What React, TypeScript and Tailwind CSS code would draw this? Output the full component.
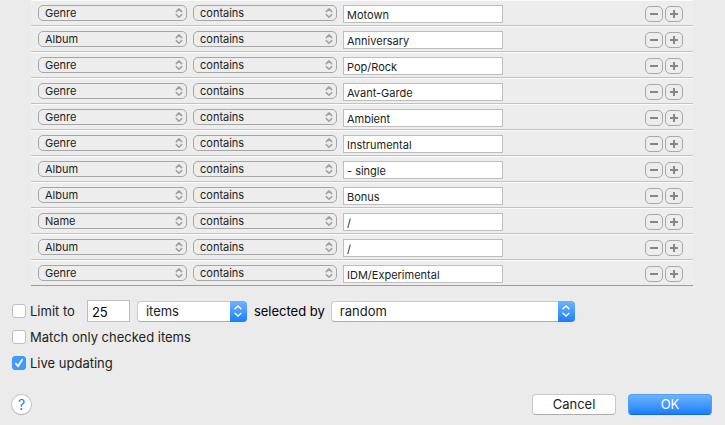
import { useState } from "react";
import clsx from "clsx";

type Rule = {
  field: string;
  value: string;
};

const RULES: Rule[] = [
  { field: "Genre", value: "Motown" },
  { field: "Album", value: "Anniversary" },
  { field: "Genre", value: "Pop/Rock" },
  { field: "Genre", value: "Avant-Garde" },
  { field: "Genre", value: "Ambient" },
  { field: "Genre", value: "Instrumental" },
  { field: "Album", value: "- single" },
  { field: "Album", value: "Bonus" },
  { field: "Name", value: "/" },
  { field: "Album", value: "/" },
  { field: "Genre", value: "IDM/Experimental" },
];

function Chevrons({ path, className }: { path: string; className?: string }) {
  return (
    <svg
      viewBox="0 0 8 12"
      fill="none"
      stroke="currentColor"
      strokeWidth="1.5"
      strokeLinecap="round"
      strokeLinejoin="round"
      aria-hidden="true"
      className={className}
    >
      <path d={path} />
    </svg>
  );
}

function SmallSelect({
  label,
  initial,
  options,
  className,
}: {
  label: string;
  initial: string;
  options: string[];
  className?: string;
}) {
  return (
    <div className={clsx("relative h-4", className)}>
      <select
        aria-label={label}
        defaultValue={initial}
        className="block h-4 w-full appearance-none rounded-[5px] border border-[#a6a6a6] bg-[#ededed] pr-4 pl-1.5 text-[11px] leading-[14px] text-[#222]"
      >
        {options.map((option) => (
          <option key={option}>{option}</option>
        ))}
      </select>
      <Chevrons
        path="M1.3 4.6 4 1.9l2.7 2.7M1.3 7.6 4 10.3l2.7-2.7"
        className="pointer-events-none absolute top-0.5 right-1 h-3 w-2 text-[#a0a0a0]"
      />
    </div>
  );
}

function BlueSelect({
  label,
  options,
  className,
}: {
  label: string;
  options: string[];
  className?: string;
}) {
  return (
    <div className={clsx("relative h-[21px]", className)}>
      <select
        aria-label={label}
        className="block h-[21px] w-full appearance-none rounded-[4px] border border-[#c8c8c8] border-b-[#acacac] bg-white pr-5 pl-2 text-[13px] leading-[18px] text-[#222]"
      >
        {options.map((option) => (
          <option key={option}>{option}</option>
        ))}
      </select>
      <span className="pointer-events-none absolute inset-y-0 right-0 flex w-[17px] items-center justify-center rounded-r-[4px] bg-linear-to-b from-[#6cb3fa] to-[#157efb] text-white">
        <Chevrons
          path="M1 3.7 4 1l3 2.7M1 8.3 4 11l3-2.7"
          className="h-3 w-2"
        />
      </span>
    </div>
  );
}

function RoundButton({ label, plus }: { label: string; plus?: boolean }) {
  return (
    <button
      type="button"
      aria-label={label}
      className="flex h-4 w-[18px] items-center justify-center rounded-[5px] border border-[#a8a8a8] text-[#868686]"
    >
      <svg viewBox="0 0 8 8" fill="currentColor" className="size-2">
        <path d={plus ? "M0 3h3V0h2v3h3v2H5v3H3V5H0z" : "M0 3h8v2H0z"} />
      </svg>
    </button>
  );
}

function RuleRow({ rule }: { rule: Rule }) {
  return (
    <li className="flex h-[26px] items-start border-t border-b border-t-[#fbfbfb] border-b-[#c2c2c2] bg-[#ededed] pt-1 pr-[10px] pl-[7px] last:border-b-[#9c9c9c]">
      <SmallSelect
        label="Field"
        initial={rule.field}
        options={["Genre", "Album", "Name"]}
        className="mr-1.5 w-[149px]"
      />
      <SmallSelect
        label="Condition"
        initial="contains"
        options={["contains", "does not contain", "is", "is not"]}
        className="mr-1.5 w-36"
      />
      <input
        type="text"
        aria-label="Value"
        defaultValue={rule.value}
        className="h-[18px] w-40 border border-[#bdbdbd] bg-white pt-0.5 pl-[3px] text-[11px] leading-[14px] text-[#222] outline-none"
      />
      <div className="ml-auto flex gap-0.5 pt-px">
        <RoundButton label="Remove rule" />
        <RoundButton label="Add rule" plus />
      </div>
    </li>
  );
}

function Checkbox({
  label,
  initial = false,
}: {
  label: string;
  initial?: boolean;
}) {
  const [checked, setChecked] = useState(initial);

  return (
    <label className="flex items-center gap-1">
      <span className="relative size-3.5">
        <input
          type="checkbox"
          checked={checked}
          onChange={(e) => setChecked(e.target.checked)}
          className="block size-3.5 appearance-none rounded-[3px] border border-[#bdbdbd] bg-white checked:border-[#3b96f8] checked:bg-[#429bfa]"
        />
        {checked && (
          <svg
            viewBox="0 0 14 14"
            fill="none"
            stroke="white"
            strokeWidth="1.7"
            strokeLinecap="round"
            strokeLinejoin="round"
            className="pointer-events-none absolute inset-0 size-3.5"
          >
            <path d="M3.8 7.6 6 10.3l4.2-6.6" />
          </svg>
        )}
      </span>
      {label}
    </label>
  );
}

export default function App() {
  return (
    <form
      onSubmit={(e) => e.preventDefault()}
      className="min-h-screen bg-[#ebebeb] font-['Inter',sans-serif] text-[13px] leading-4 text-[#222]"
    >
      <ul className="mr-8 ml-[31px]">
        {RULES.map((rule, i) => (
          <RuleRow key={i} rule={rule} />
        ))}
      </ul>

      <div className="px-3 pt-3">
        <div className="flex h-[26px] items-center">
          <Checkbox label="Limit to" />
          <input
            type="text"
            aria-label="Limit"
            defaultValue="25"
            className="ml-3 h-[22px] w-[43px] border border-[#bdbdbd] bg-white pt-0.5 pl-1 text-[13px] leading-4 text-black outline-none"
          />
          <BlueSelect
            label="Unit"
            options={["items", "minutes", "hours", "MB", "GB"]}
            className="ml-[7px] w-[110px]"
          />
          <span className="ml-[7px] text-black">selected by</span>
          <BlueSelect
            label="Selected by"
            options={["random", "album", "artist", "genre"]}
            className="ml-1.5 w-[244px]"
          />
        </div>
        <div className="flex h-[26px] items-center">
          <Checkbox label="Match only checked items" />
        </div>
        <div className="flex h-[26px] items-center">
          <Checkbox label="Live updating" initial />
        </div>
      </div>

      <div className="flex items-center gap-3 pt-[18px] pr-[13px] pl-3">
        <button
          type="button"
          aria-label="Help"
          className="mr-auto size-[19px] rounded-full bg-white text-[14px] leading-[19px] text-[#1a7cf5] shadow-[0_0_0_1px_#c6c6c6,0_1px_1px_#aaa]"
        >
          ?
        </button>
        <button
          type="button"
          className="h-[21px] w-21 rounded-[4px] border border-[#c8c8c8] border-b-[#acacac] bg-white leading-[19px]"
        >
          Cancel
        </button>
        <button
          type="submit"
          className="h-[21px] w-21 rounded-[4px] border border-[#4ea0f5] border-b-[#0f6cf0] bg-linear-to-b from-[#6cb3fa] to-[#157efb] leading-[19px] text-white"
        >
          OK
        </button>
      </div>
    </form>
  );
}
